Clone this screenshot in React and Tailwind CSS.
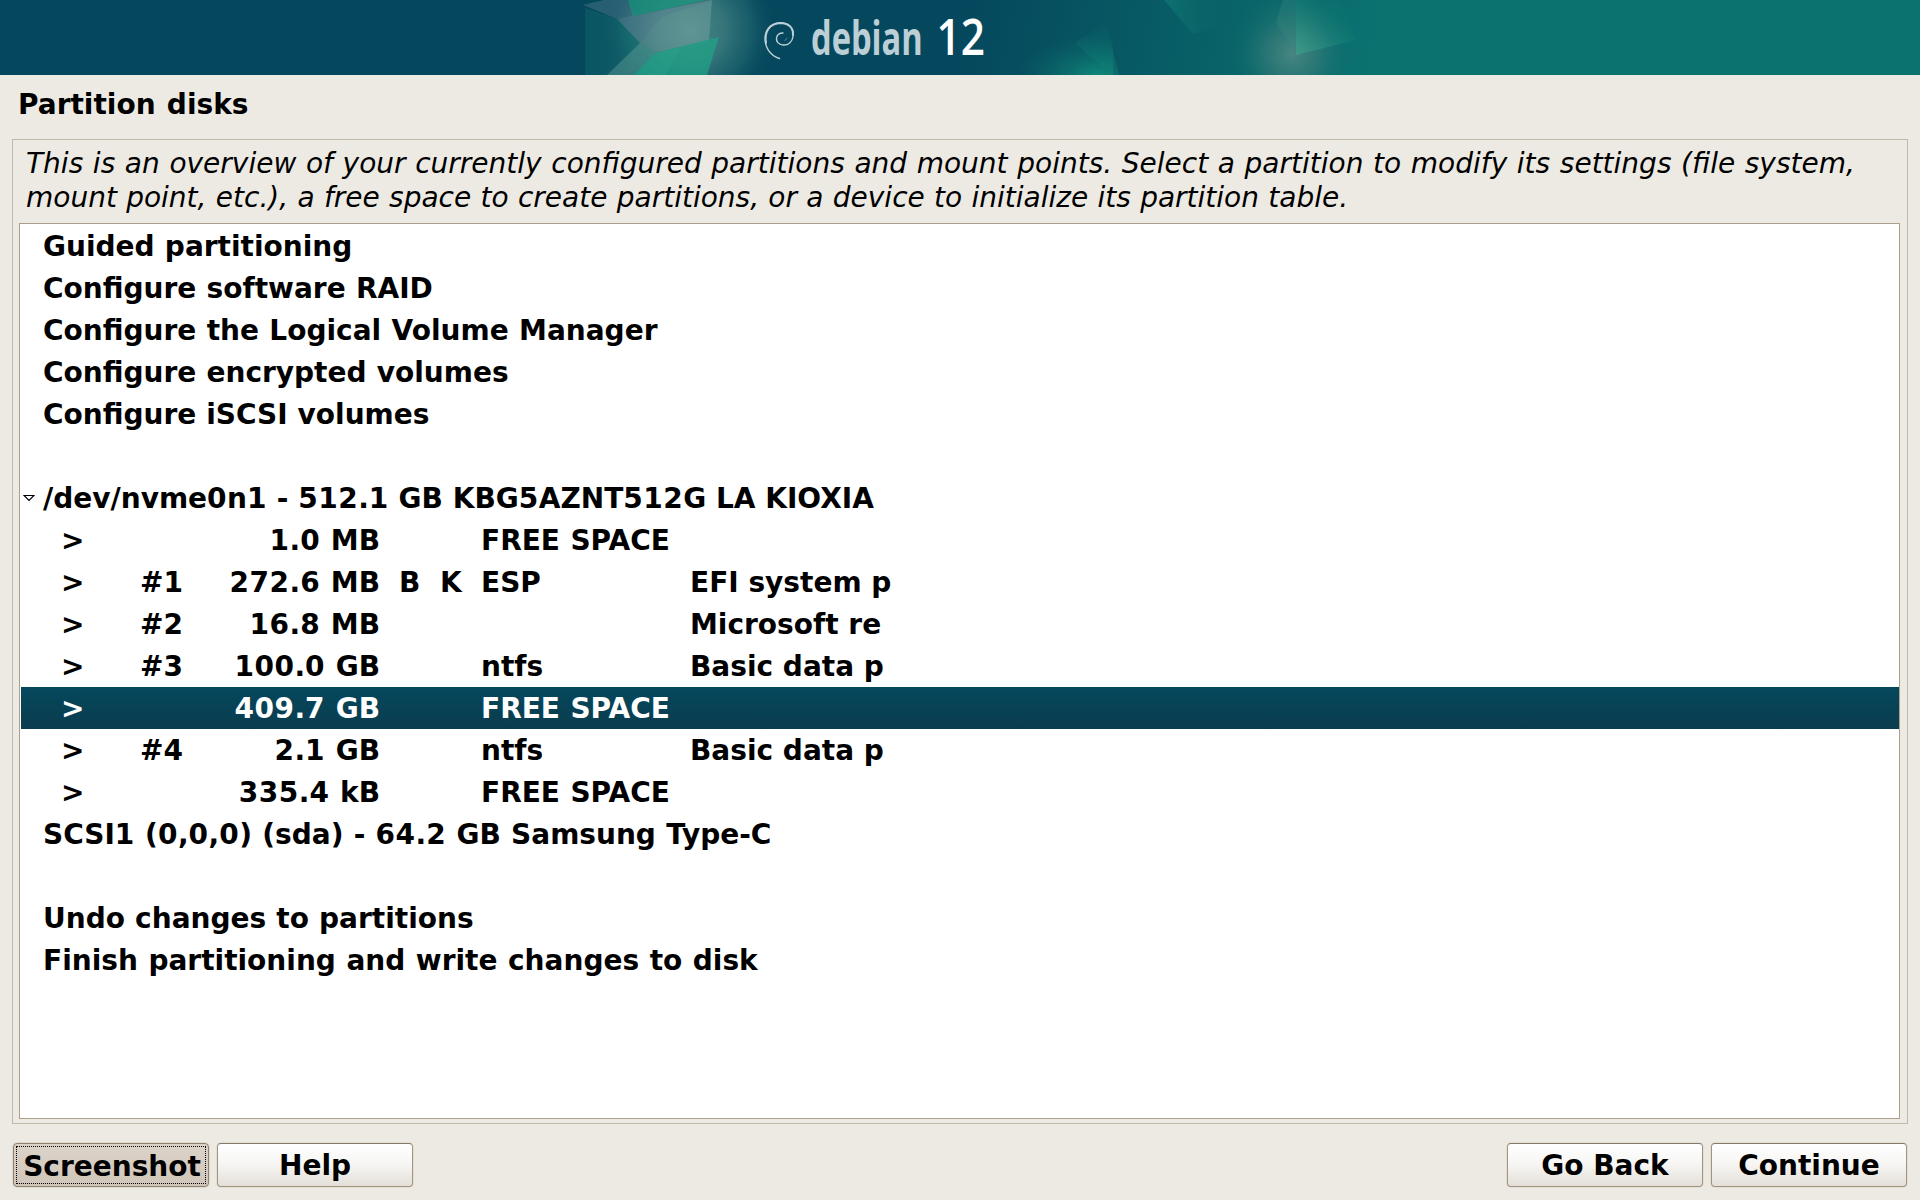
const rows = [
  { text: "Guided partitioning", spacing: "[word-spacing:0.5px]" },
  { text: "Configure software RAID", spacing: "[word-spacing:0.6px]" },
  { text: "Configure the Logical Volume Manager", spacing: "[word-spacing:0.65px]" },
  { text: "Configure encrypted volumes", spacing: "[word-spacing:0.5px]" },
  { text: "Configure iSCSI volumes", spacing: "[word-spacing:0.2px]" },
  { text: "", spacing: "" },
  { text: "/dev/nvme0n1 - 512.1 GB KBG5AZNT512G LA KIOXIA", open: true, spacing: "[word-spacing:0px]" },
  { size: "1.0 MB", fs: "FREE SPACE" },
  { num: "#1", size: "272.6 MB", boot: "B", keep: "K", fs: "ESP", name: "EFI system p" },
  { num: "#2", size: "16.8 MB", name: "Microsoft re" },
  { num: "#3", size: "100.0 GB", fs: "ntfs", name: "Basic data p" },
  { size: "409.7 GB", fs: "FREE SPACE", selected: true },
  { num: "#4", size: "2.1 GB", fs: "ntfs", name: "Basic data p" },
  { size: "335.4 kB", fs: "FREE SPACE" },
  { text: "SCSI1 (0,0,0) (sda) - 64.2 GB Samsung Type-C", spacing: "[word-spacing:0.5px]" },
  { text: "", spacing: "" },
  { text: "Undo changes to partitions", spacing: "[word-spacing:0.4px]" },
  { text: "Finish partitioning and write changes to disk", spacing: "[word-spacing:0.8px]" },
];

function Banner() {
  return (
    <svg className="block h-[75px] w-full shrink-0" viewBox="0 0 1920 75" preserveAspectRatio="none">
      <defs>
        <linearGradient id="sky" gradientUnits="userSpaceOnUse" x1="970" y1="0" x2="1370" y2="75">
          <stop offset="0" stopColor="#05485d" />
          <stop offset="0.55" stopColor="#085f66" />
          <stop offset="1" stopColor="#0b7270" />
        </linearGradient>
        <radialGradient id="glowL" gradientUnits="userSpaceOnUse" cx="690" cy="30" r="88">
          <stop offset="0" stopColor="#478886" />
          <stop offset="0.4" stopColor="#37777b" stopOpacity="0.95" />
          <stop offset="0.7" stopColor="#1c626d" stopOpacity="0.75" />
          <stop offset="1" stopColor="#05485d" stopOpacity="0" />
        </radialGradient>
        <radialGradient id="glowR" gradientUnits="userSpaceOnUse" cx="1292" cy="54" r="64">
          <stop offset="0" stopColor="#4f8985" stopOpacity="0.9" />
          <stop offset="0.4" stopColor="#3a7d7a" stopOpacity="0.65" />
          <stop offset="1" stopColor="#0a6c6c" stopOpacity="0" />
        </radialGradient>
        <radialGradient id="glowB" gradientUnits="userSpaceOnUse" cx="1098" cy="76" r="80" gradientTransform="translate(0 38) scale(1 0.5)">
          <stop offset="0" stopColor="#118f7c" stopOpacity="0.9" />
          <stop offset="1" stopColor="#0b6a69" stopOpacity="0" />
        </radialGradient>
        <linearGradient id="teal" x1="0" y1="0" x2="1" y2="0">
          <stop offset="0" stopColor="#14746f" stopOpacity="0.3" />
          <stop offset="1" stopColor="#1d7a78" stopOpacity="0.4" />
        </linearGradient>
        <linearGradient id="shardR" x1="0" y1="1" x2="1" y2="0">
          <stop offset="0" stopColor="#3fa08c" stopOpacity="0.8" />
          <stop offset="0.7" stopColor="#0f7a72" stopOpacity="0.3" />
          <stop offset="1" stopColor="#0b7672" stopOpacity="0" />
        </linearGradient>
        <linearGradient id="shardT" x1="0" y1="0" x2="1" y2="0">
          <stop offset="0" stopColor="#118077" stopOpacity="0.6" />
          <stop offset="0.7" stopColor="#0a6569" stopOpacity="0" />
        </linearGradient>
        <linearGradient id="shardB" x1="0" y1="0" x2="0" y2="1">
          <stop offset="0" stopColor="#118077" stopOpacity="0" />
          <stop offset="1" stopColor="#118077" stopOpacity="0.5" />
        </linearGradient>
      </defs>
      <rect width="1920" height="75" fill="#05485d" />
      <rect x="960" width="960" height="75" fill="url(#sky)" />
      <rect x="585" width="195" height="75" fill="url(#glowL)" />
      <path d="M585 8 L617 19 L634 75 H585 Z" fill="url(#teal)" />
      <path d="M617 19 L640 43 L655 53 L634 75 Z" fill="#167f76" opacity="0.4" />
      <path d="M628 0 H706 L633 16 Z" fill="#1d957d" opacity="0.75" />
      <path d="M583 5 L604 0 H628 L634 16 L617 19 Z" fill="#66899b" opacity="0.35" />
      <path d="M617 19 L712 0 L661 17 L640 43 Z" fill="#7e98a8" opacity="0.4" />
      <path d="M712 0 L661 17 L640 43 L655 53 L709 40 Z" fill="#8aaeab" opacity="0.36" />
      <path d="M655 53 L719 37 L707 75 H634 Z" fill="#1fa387" opacity="0.72" />
      <path d="M640 43 L607 75 H634 L655 53 Z" fill="#6aa39c" opacity="0.42" />
      <path d="M655 53 L682 47 L665 75 H634 Z" fill="#2fa48d" opacity="0.35" />
      <rect x="1015" y="35" width="98" height="40" fill="url(#glowB)" />
      <path d="M1106 22 L1119 75 H1113 L1075 43 Z" fill="url(#shardB)" />
      <path d="M1164 0 H1260 L1225 25 L1193 34 Z" fill="url(#shardT)" />
      <rect x="1225" width="134" height="75" fill="url(#glowR)" />
      <path d="M1283 0 H1296 V55 L1276 22 Z" fill="#3b8a82" opacity="0.3" />
      <path d="M1296 0 H1340 L1356 40 L1296 55 Z" fill="url(#shardR)" />
      <g fill="none" stroke="#bccfd6" strokeLinecap="round">
        <path d="M779.5 58.5 C769 55 764.5 46 765.200 37 C766 28 773 23 781 23 C789 23 794 28 793 36.500 C792.500 42 788 45.500 783 45 C778.500 44.500 776 41.500 776.500 38 C777 34.500 779.500 33 783 33" strokeWidth="1.4" />
        <path d="M766 43 C764 31 770 23.500 780 23 C789 23 793.500 28 793 35" strokeWidth="2" />
        <path d="M785 40.500 L787 38" strokeWidth="0.8" opacity="0.6" />
      </g>
      <g transform="translate(811 54.500) scale(0.71 1)">
        <text className="font-['Open_Sans'] text-[46px] font-bold" fill="#bccfd6">debian</text>
      </g>
      <g transform="translate(936.500 55) scale(0.83 1)">
        <text className="font-['Open_Sans'] text-[51px] font-semibold" fill="#ffffff">12</text>
      </g>
    </svg>
  );
}

/* Digits are set slightly wider than the font's own advance. */
function Label({ text }) {
  return text.split(/(\d+)/).map((part, i) =>
    i % 2 ? (
      <span key={i} className="tracking-[0.52px]">{part}</span>
    ) : (
      part
    )
  );
}

function Row({ row }) {
  if (row.text !== undefined) {
    return (
      <div className="flex h-[42px] items-center">
        <span className="flex w-[22px] shrink-0 items-center pl-0.5">
          {row.open && (
            <svg className="h-2 w-3" viewBox="0 0 12 8">
              <path d="M1 1.500 H11 L6 6.500 Z" fill="#fff" stroke="#000" strokeWidth="1.2" />
            </svg>
          )}
        </span>
        <span className={`pt-0.5 whitespace-pre ${row.spacing}`}>
          <Label text={row.text} />
        </span>
      </div>
    );
  }
  return (
    <div className={row.selected ? "flex h-[42px] items-center bg-linear-to-b from-[#05485d] to-[#0a3c4e] pt-0.5 text-white" : "flex h-[42px] items-center pt-0.5"}>
      <span className="ml-10 w-[79px]">&gt;</span>
      <span className="w-[60px]">{row.num}</span>
      <span className="w-[180px] text-right [word-spacing:0.8px]">
        <Label text={row.size} />
      </span>
      <span className="ml-[19px] w-[41px]">{row.boot}</span>
      <span className="w-[41px]">{row.keep}</span>
      <span className="w-[209px] [word-spacing:0.7px]">{row.fs}</span>
      <span>{row.name}</span>
    </div>
  );
}

function Button({ children, pressed }) {
  return (
    <button
      className={
        pressed
          ? "relative flex h-11 w-[196px] items-center justify-center rounded-[4px] border border-[#8f8370] bg-linear-to-b from-[#ddd4c9] to-[#cfc5b9] pt-1 pl-0.5 font-bold shadow-[0_0_0_1px_#e0dbd0]"
          : "flex h-11 w-[196px] items-center justify-center rounded-[4px] border border-[#a09480] border-t-[#857a67] bg-linear-to-b from-white via-[#f6f5f3] to-[#e4dfd8] pt-0.5 font-bold shadow-[0_0_0_1px_#e4dfd5]"
      }
    >
      {pressed && <span className="absolute inset-x-[2px] inset-y-[2px] border border-dotted border-black" />}
      {children}
    </button>
  );
}

export default function App() {
  return (
    <div className="flex h-[1200px] w-[1920px] flex-col overflow-hidden bg-[#edeae3] font-['DejaVu_Sans',sans-serif] text-[28px] leading-[34px] text-black">
      <Banner />
      <h1 className="mt-[13px] ml-[18px] h-[51px] font-bold [word-spacing:1.5px]">Partition disks</h1>
      <main className="mx-3 flex h-[985px] shrink-0 flex-col border border-[#c0b8a8] pt-[7px] pr-[7px] pb-1 pl-1.5">
        <p className="mb-[8px] h-[68px] pl-[7px] whitespace-nowrap italic">
          <span className="[word-spacing:0.74px]">
            This is an overview of your currently configured partitions and mount points. Select a partition to modify its settings (file system,
          </span>
          <br />
          <span className="[word-spacing:0.41px]">
            mount point, etc.), a free space to create partitions, or a device to initialize its partition table.
          </span>
        </p>
        <div className="flex-1 border border-[#aca08d] bg-white pt-px pl-px font-bold whitespace-nowrap">
          {rows.map((row, i) => (
            <Row key={i} row={row} />
          ))}
        </div>
      </main>
      <footer className="mt-[19px] flex justify-between px-[13px]">
        <div className="flex gap-2">
          <Button pressed>Screenshot</Button>
          <Button>Help</Button>
        </div>
        <div className="flex gap-2">
          <Button>Go Back</Button>
          <Button>Continue</Button>
        </div>
      </footer>
    </div>
  );
}
